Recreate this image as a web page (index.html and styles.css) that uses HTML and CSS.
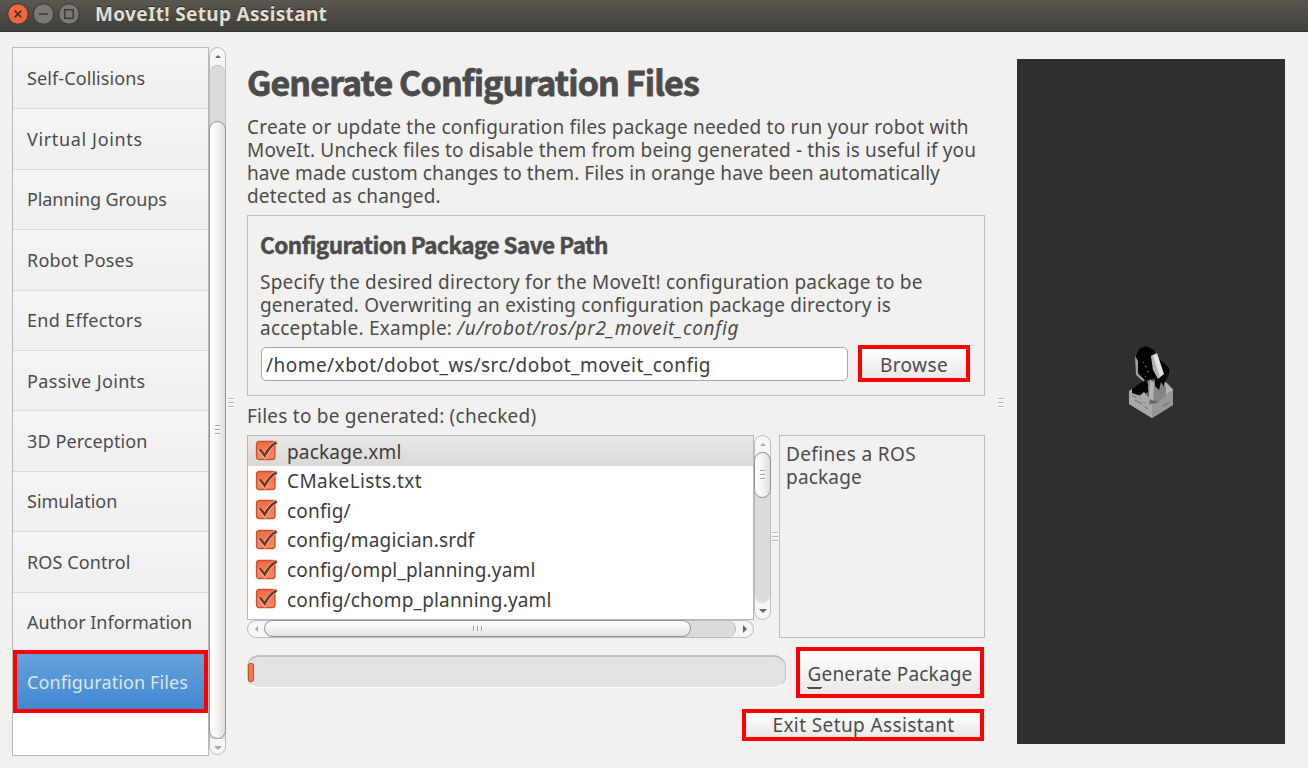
FILE: index.html
```html
<!DOCTYPE html>
<html lang="en">
<head>
<meta charset="utf-8">
<title>MoveIt! Setup Assistant</title>
<link rel="stylesheet" href="styles.css">
</head>
<body>
<svg class="defs" aria-hidden="true">
  <defs>
    <linearGradient id="boxfill" x1="0" y1="0" x2="0" y2="1"><stop offset="0" stop-color="#ef6a45"/><stop offset="1" stop-color="#fb8a62"/></linearGradient>
    <symbol id="check" viewBox="0 0 24 24">
      <rect x="1.5" y="2.5" width="18.5" height="18" rx="2.5" fill="url(#boxfill)" stroke="#c9502c" stroke-width="1.3"/>
      <path d="M4.5 10.5l5.2 6.5C12.500 11 16 6.500 22 3" fill="none" stroke="#ffb295" stroke-width="4.200"/>
      <path d="M4.800 10.300l5 6.200C12.500 11 16 6.500 21.500 3.300" fill="none" stroke="#6e3a2b" stroke-width="2.600"/>
    </symbol>
  </defs>
</svg>
<header class="titlebar">
  <svg class="winbtns" width="74" height="28" viewBox="0 0 74 28">
    <circle cx="10" cy="14" r="10.200" fill="#f0673c" stroke="#3b3934"/>
    <path d="M6.700 10.700l6.600 6.600M13.300 10.700L6.700 17.300" stroke="#54301f" stroke-width="1.800"/>
    <circle cx="35.500" cy="14" r="10.200" fill="#7b7972" stroke="#3b3934"/>
    <path d="M31 14h9" stroke="#3f3d38" stroke-width="1.500"/>
    <circle cx="61" cy="14" r="10.200" fill="#7b7972" stroke="#3b3934"/>
    <rect x="56.700" y="9.800" width="8.500" height="8.500" fill="none" stroke="#3f3d38" stroke-width="1.500"/>
  </svg>
  <span class="wintitle">MoveIt! Setup Assistant</span>
</header>
<main class="content">
  <nav class="sidebar">
    <div class="nav-item n1">Self-Collisions</div>
    <div class="nav-item n2">Virtual Joints</div>
    <div class="nav-item n3">Planning Groups</div>
    <div class="nav-item n4">Robot Poses</div>
    <div class="nav-item n5">End Effectors</div>
    <div class="nav-item n6">Passive Joints</div>
    <div class="nav-item n7">3D Perception</div>
    <div class="nav-item n8">Simulation</div>
    <div class="nav-item n9">ROS Control</div>
    <div class="nav-item n10">Author Information</div>
    <div class="nav-item selected">Configuration Files</div>
  </nav>
  <div class="vscroll side-scroll">
    <i class="arrow up dark"></i>
    <div class="track"><div class="thumb"><i class="grip"></i></div></div>
    <i class="arrow down"></i>
  </div>
  <i class="grip split left"></i>
  <section class="page">
    <h1>Generate Configuration Files</h1>
    <p class="intro"><span>Create or update the configuration files package needed to run your robot with</span><span class="i2">MoveIt. Uncheck files to disable them from being generated - this is useful if you</span><span class="i3">have made custom changes to them. Files in orange have been automatically</span><span class="i4">detected as changed.</span></p>
    <section class="group">
      <h2>Configuration Package Save Path</h2>
      <p class="spec"><span>Specify the desired directory for the MoveIt! configuration package to be</span><span class="s2">generated. Overwriting an existing configuration package directory is</span><span>acceptable. Example: <em>/u/robot/ros/pr2_moveit_config</em></span></p>
      <div class="path-row">
        <div class="path">/home/xbot/dobot_ws/src/dobot_moveit_config</div>
        <button class="btn browse">Browse</button>
      </div>
    </section>
    <div class="files-label">Files to be generated: (checked)</div>
    <div class="files">
      <div class="list">
        <div class="row current"><svg><use href="#check"/></svg>package.xml</div>
        <div class="row f2"><svg><use href="#check"/></svg>CMakeLists.txt</div>
        <div class="row"><svg><use href="#check"/></svg>config/</div>
        <div class="row"><svg><use href="#check"/></svg>config/magician.srdf</div>
        <div class="row"><svg><use href="#check"/></svg>config/ompl_planning.yaml</div>
        <div class="row"><svg><use href="#check"/></svg>config/chomp_planning.yaml</div>
      </div>
      <div class="vscroll list-scroll">
        <i class="arrow up"></i>
        <div class="track"><div class="thumb"><i class="grip"></i></div></div>
        <i class="arrow down dark"></i>
      </div>
      <div class="hscroll">
        <i class="arrow lt"></i>
        <div class="track"><div class="thumb"><i class="grip h"></i></div></div>
        <i class="arrow rt dark"></i>
      </div>
      <i class="grip split mid"></i>
      <div class="desc"><span>Defines a ROS</span><span class="d2">package</span></div>
    </div>
    <div class="generate-row">
      <div class="progress"><div class="bar"></div></div>
      <button class="btn generate"><span class="mn">G</span>enerate Package</button>
    </div>
    <button class="btn exit">Exit Setup Assistant</button>
  </section>
  <i class="grip split right"></i>
  <aside class="viewport">
    <svg width="80" height="100" viewBox="0 0 80 100">
      <path d="M19 61l15-9h22l7 7v16L42 88 19 74z" fill="#8f8f8f"/>
      <path d="M19 61l16-9h20l8 8-21 14z" fill="#b5b5b5"/>
      <path d="M42 74l21-14v15L42 88z" fill="#989898"/>
      <path d="M19 61l23 13v14L19 74z" fill="#a8a8a8"/>
      <path d="M22 66l4 1M25 70l7 4M29 67l6 6M35 77l3 2M53 76l7-4" stroke="#777" stroke-width="1.200"/>
      <path d="M27 62l9-9 17 3 3 8-9 9-8 1z" fill="#666"/>
      <path d="M22 59l8-6 7-2 3 10-9 5-9-3z" fill="#050505"/>
      <path d="M38 50l12 1 6 6v9l-9 6-6-3-3-9z" fill="#858585"/>
      <path d="M40 50l4 3-1 18-4-3z" fill="#b5b5b5"/>
      <path d="M45 49v7l4 4 2-8 3 5 1-7-5-5z" fill="#000"/>
      <path d="M29 66l5-4 6 7-1 5-8-3z" fill="#aaa"/>
      <path d="M26 26l3-7 7-3 8 4 4 8 6 5 5 5 0 6-5 9-9-5-11 3-6-10z" fill="#020202"/>
      <path d="M25 26l3 5v13l7 6-2 1-7-6z" fill="#a2a2a2"/>
      <path d="M41 26l6-3 7 21-5 4z" fill="#e2e2e2"/>
      <path d="M41 26l2-1 7 22-2 2-5-9z" fill="#b4b4b4"/>
      <path d="M35 36l2 1M33 32l1 1M37 41l2 1M35 46l1 1" stroke="#777"/>
    </svg>
  </aside>
</main>
</body>
</html>
```
FILE: styles.css
```css
* { box-sizing: border-box; }

body {
  margin: 0;
  width: 1308px;
  height: 768px;
  overflow: hidden;
  display: flex;
  flex-direction: column;
  background: #f2f1ef;
  color: #4c4c4c;
  font: 19px/23px "Noto Sans", sans-serif;
  letter-spacing: 0.2px;
  white-space: nowrap;
}

.defs { position: absolute; width: 0; height: 0; }

.titlebar {
  flex: none;
  height: 32px;
  display: flex;
  align-items: center;
  gap: 13px;
  padding: 0 0 3px 8px;
  background: linear-gradient(#59574f, #403e39);
  border-bottom: 1px solid #34322e;
  color: #e2ded4;
}
.winbtns { flex: none; overflow: visible; }
.wintitle { font-weight: 700; font-size: 19px; letter-spacing: 0.33px; text-shadow: 0 -1px 0 #292824; padding-top: 1px; }

.content { flex: 1; display: flex; align-items: flex-start; min-height: 0; }

/* Step list */
.sidebar {
  flex: none;
  width: 197px;
  height: 709px;
  margin: 15px 0 0 12px;
  background: #fff;
  border: 1.500px solid #bbb7b2;
  font-size: 18px;
  letter-spacing: 0.1px;
}
.nav-item {
  height: 60.400px;
  padding: 1px 0 0 14px;
  display: flex;
  align-items: center;
  background: linear-gradient(#f5f5f5, #efefef);
  border-bottom: 1px solid #dcdad8;
}
.n1 { height: 61.400px; }
.n2 { letter-spacing: 0.65px; }
.n3 { letter-spacing: -0.1px; }
.n4 { letter-spacing: 0.22px; }
.n5 { letter-spacing: 0.3px; }
.n6 { letter-spacing: 0.35px; }
.n8 { letter-spacing: 0; }
.n10 { letter-spacing: 0; border-bottom: 0; height: 57.500px; padding-top: 3px; }
.selected {
  height: 63px;
  padding: 2px 0 0 10px;
  border: 4px solid #f00;
  background: linear-gradient(#68a2db, #4089d3);
  color: #dfe4ea;
  letter-spacing: 0.120px;
}

/* Scrollbars */
.vscroll, .hscroll {
  display: flex;
  align-items: center;
  background: #f7f6f5;
  border: 1px solid #bfbbb7;
  border-radius: 9px;
}
.vscroll { flex: none; width: 17px; flex-direction: column; }
.side-scroll { height: 708px; margin-top: 15px; }
.track { background: #dedcda; flex: 1; }
.vscroll .track { width: 15px; border-radius: 8px 8px 0 0; border-top: 1px solid #c0bdb9; }
.thumb {
  display: flex;
  align-items: center;
  justify-content: center;
  border: 1.500px solid #96938e;
  border-radius: 9px;
}
.vscroll .thumb { width: 17px; margin-left: -1px; background: linear-gradient(90deg, #fff, #f5f4f3 50%, #dfdddb); }
.side-scroll .thumb { height: 618px; margin-top: 55px; }
.arrow { flex: none; height: 17px; width: 15px; display: flex; align-items: center; justify-content: center; }
.arrow::before { content: ""; border: 3.500px solid transparent; color: #aaa; }
.arrow.dark::before { color: #666; }
.up::before { border-width: 0 3px 3px; border-bottom-color: currentColor; }
.down::before { border-width: 4px 4px 0; border-top-color: currentColor; }
.lt::before { border-width: 3px 3px 3px 0; border-right-color: currentColor; }
.rt::before { border-width: 4px 0 4px 4px; border-left-color: currentColor; }

.grip {
  flex: none;
  display: block;
  width: 5px;
  height: 10px;
  background: repeating-linear-gradient(#a5a29e 0 1px, #fff 1px 2px, transparent 2px 4px);
}
.grip.h { width: 10px; height: 5px; background: repeating-linear-gradient(90deg, #a5a29e 0 1px, #fff 1px 2px, transparent 2px 4px); }
.grip.split { width: 6px; opacity: 0.700; }
.grip.left { margin: 366px 13px 0 2px; }
.grip.right { margin: 366px 13px 0; }

/* Page */
.page { flex: none; width: 738px; padding-top: 27px; display: flex; flex-direction: column; }
h1, h2 { margin: 0; font-family: "Noto Sans CJK SC", "Noto Sans", sans-serif; }
h1 { font-size: 34px; line-height: 46px; height: 57px; letter-spacing: -0.880px; -webkit-text-stroke: 0.800px; }
h2 { font-size: 22.500px; line-height: 28px; height: 41px; letter-spacing: -0.530px; -webkit-text-stroke: 0.500px; }
p { margin: 0; }
p span, .desc span { display: block; }
.intro { height: 99px; }
.i2 { letter-spacing: 0.160px; }
.i3 { letter-spacing: 0.080px; }
.i4 { letter-spacing: 0.170px; }
.spec em { letter-spacing: 0.630px; }
.spec > span { letter-spacing: 0.230px; }
.spec > .s2 { letter-spacing: 0.180px; }

.group { height: 181px; border: 1px solid #c0bdb9; padding: 14px 12px 0; }
.path-row { display: flex; align-items: center; gap: 10px; height: 37px; margin-top: 5px; }
.path {
  width: 587px;
  height: 34px;
  margin-left: 1px;
  border: 1.500px solid #aaa6a1;
  border-radius: 5px;
  background: #fff;
  padding: 6px 4px;
  color: #3c3c3c;
  letter-spacing: 0.460px;
}
.btn {
  font: inherit;
  letter-spacing: 0.180px;
  color: #4c4c4c;
  border: 4px solid #f00;
  padding: 0;
  background: linear-gradient(#fff, #e9e8e6);
}
.browse { width: 112px; height: 37px; letter-spacing: 0.4px; padding-top: 3px; }

.files-label { height: 39px; padding-top: 9px; letter-spacing: 0.230px; }

.files {
  display: grid;
  grid-template-columns: 507px 17px 8px 206px;
  grid-template-rows: 185px 18px;
}
.list { grid-row: 1; grid-column: 1; background: #fff; border: 1.500px solid #bbb7b2; color: #3c3c3c; letter-spacing: 0.180px; }
.row { height: 29.600px; display: flex; align-items: center; gap: 8px; padding: 2px 0 0 7px; }
.row.current { background: linear-gradient(#e9e8e6, #dbd9d6); height: 30px; padding-top: 2px; }
.row svg { width: 24px; height: 24px; flex: none; margin-top: -2px; }
.f2 { letter-spacing: 0.390px; }
.list-scroll { grid-row: 1; grid-column: 2; }
.list-scroll .thumb { height: 46px; margin-top: -1px; }
.vscroll.list-scroll .track { border-radius: 8px; }
.list-scroll .arrow { height: 16px; }
.hscroll { grid-row: 2; grid-column: 1; }
.hscroll .track { height: 16px; border-radius: 8px; border-right: 1px solid #bbb7b2; }
.hscroll .thumb { width: 427px; height: 17px; margin: -1px 0 0 -1px; background: linear-gradient(#fff, #e6e4e2); }
.hscroll .arrow { width: 17px; }
.grip.mid { grid-row: 1 / 3; grid-column: 3; margin: 97px 0 0 1px; }
.desc { grid-row: 1 / 3; grid-column: 4; border: 1.500px solid #c0bdb9; padding: 7px 6px; letter-spacing: 0.370px; }
.d2 { letter-spacing: 0.190px; }

.generate-row { display: flex; align-items: flex-start; height: 62px; padding-top: 9px; gap: 10px; }
.progress {
  width: 539px;
  height: 33px;
  margin-top: 8px;
  display: flex;
  align-items: center;
  padding-left: 1px;
  border-radius: 12px;
  background: #e3e2e0;
  border-top: 2px solid #c3c0bb;
  border-left: 1px solid #cbc8c4;
  border-right: 1px solid #cbc8c4;
  border-bottom: 1px solid #fff;
}
.bar { width: 6px; height: 19px; margin-left: -1px; border: 1px solid #c25530; border-radius: 2px; background: #f4794e; }
.generate { width: 188px; height: 51px; padding-top: 3px; }
.mn { box-shadow: 0 2px 0 -1px #4c4c4c; border-bottom: 1px solid #4c4c4c; }
.exit {
  align-self: flex-end;
  width: 242px;
  height: 32px;
  margin: 9px 1px 0 0;
  letter-spacing: 0.4px;
  padding: 1px 0 0 1px;
}

.viewport { flex: none; width: 268px; height: 685px; margin-top: 27px; background: #2f2f2f; padding: 271px 0 0 93px; }
.viewport svg { display: block; filter: blur(0.500px); }
```
